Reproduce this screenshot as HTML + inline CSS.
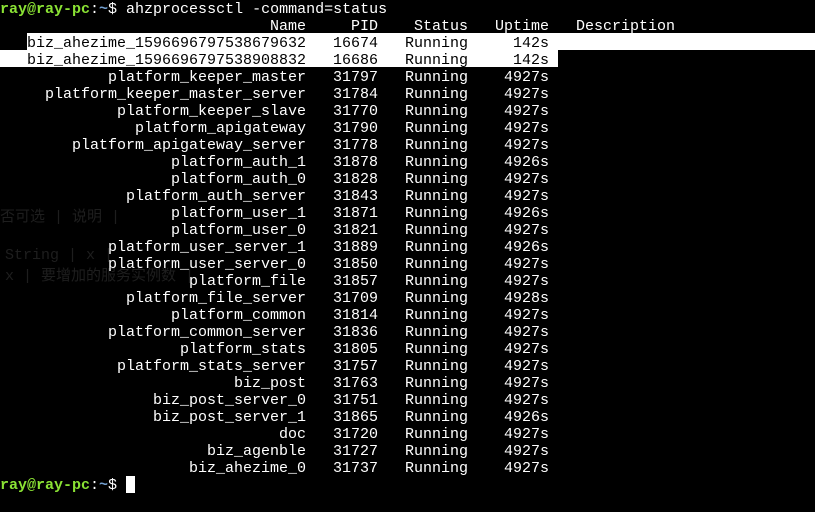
<!DOCTYPE html>
<html><head><meta charset="utf-8"><style>
html,body{margin:0;padding:0;background:#000;width:815px;height:512px;overflow:hidden}
#t{position:absolute;left:0;top:1px;font-family:"Liberation Mono","DejaVu Sans Mono",monospace;font-size:15px;line-height:17px;color:#fff}
.l{height:17px;white-space:pre;position:relative}
.g{color:#8ae234;font-weight:bold}.b{color:#729fcf;font-weight:bold}
.cur{display:inline-block;width:9px;height:17px;background:#fff;vertical-align:top;margin-top:-1px}
.n,.p,.s,.u{display:inline-block;vertical-align:top}
.n{width:306px;text-align:right}.p{width:72px;text-align:right}.s{width:63px;margin-left:27px;text-align:right}.u{width:81px;text-align:right}
.hl{position:absolute;background:#fff;height:17px}
.k{color:#000}
.bg{position:absolute;color:#1e1e1e;font-family:"Liberation Mono","Noto Sans CJK SC",monospace;font-size:15px;white-space:pre}
</style></head><body>
<div class="bg" style="left:0;top:205px">否可选 | 说明 |</div>
<div class="bg" style="left:5px;top:247px">String | x |</div>
<div class="bg" style="left:5px;top:264px">x | 要增加的服务实例数 |</div>
<div class="hl" style="left:27px;top:33px;width:788px"></div>
<div class="hl" style="left:0;top:50px;width:558px"></div>
<div id="t">
<div class="l"><span class="g">ray@ray-pc</span>:<span class="b">~</span>$ ahzprocessctl -command=status</div>
<div class="l"><span class="n">Name</span><span class="p">PID</span><span class="s" style="width:54px;margin-left:36px">Status</span><span class="u">Uptime</span>   Description</div>
<div class="l k"><span class="n">biz_ahezime_1596696797538679632</span><span class="p">16674</span><span class="s">Running</span><span class="u">142s</span></div>
<div class="l k"><span class="n">biz_ahezime_1596696797538908832</span><span class="p">16686</span><span class="s">Running</span><span class="u">142s</span></div>
<div class="l"><span class="n">platform_keeper_master</span><span class="p">31797</span><span class="s">Running</span><span class="u">4927s</span></div>
<div class="l"><span class="n">platform_keeper_master_server</span><span class="p">31784</span><span class="s">Running</span><span class="u">4927s</span></div>
<div class="l"><span class="n">platform_keeper_slave</span><span class="p">31770</span><span class="s">Running</span><span class="u">4927s</span></div>
<div class="l"><span class="n">platform_apigateway</span><span class="p">31790</span><span class="s">Running</span><span class="u">4927s</span></div>
<div class="l"><span class="n">platform_apigateway_server</span><span class="p">31778</span><span class="s">Running</span><span class="u">4927s</span></div>
<div class="l"><span class="n">platform_auth_1</span><span class="p">31878</span><span class="s">Running</span><span class="u">4926s</span></div>
<div class="l"><span class="n">platform_auth_0</span><span class="p">31828</span><span class="s">Running</span><span class="u">4927s</span></div>
<div class="l"><span class="n">platform_auth_server</span><span class="p">31843</span><span class="s">Running</span><span class="u">4927s</span></div>
<div class="l"><span class="n">platform_user_1</span><span class="p">31871</span><span class="s">Running</span><span class="u">4926s</span></div>
<div class="l"><span class="n">platform_user_0</span><span class="p">31821</span><span class="s">Running</span><span class="u">4927s</span></div>
<div class="l"><span class="n">platform_user_server_1</span><span class="p">31889</span><span class="s">Running</span><span class="u">4926s</span></div>
<div class="l"><span class="n">platform_user_server_0</span><span class="p">31850</span><span class="s">Running</span><span class="u">4927s</span></div>
<div class="l"><span class="n">platform_file</span><span class="p">31857</span><span class="s">Running</span><span class="u">4927s</span></div>
<div class="l"><span class="n">platform_file_server</span><span class="p">31709</span><span class="s">Running</span><span class="u">4928s</span></div>
<div class="l"><span class="n">platform_common</span><span class="p">31814</span><span class="s">Running</span><span class="u">4927s</span></div>
<div class="l"><span class="n">platform_common_server</span><span class="p">31836</span><span class="s">Running</span><span class="u">4927s</span></div>
<div class="l"><span class="n">platform_stats</span><span class="p">31805</span><span class="s">Running</span><span class="u">4927s</span></div>
<div class="l"><span class="n">platform_stats_server</span><span class="p">31757</span><span class="s">Running</span><span class="u">4927s</span></div>
<div class="l"><span class="n">biz_post</span><span class="p">31763</span><span class="s">Running</span><span class="u">4927s</span></div>
<div class="l"><span class="n">biz_post_server_0</span><span class="p">31751</span><span class="s">Running</span><span class="u">4927s</span></div>
<div class="l"><span class="n">biz_post_server_1</span><span class="p">31865</span><span class="s">Running</span><span class="u">4926s</span></div>
<div class="l"><span class="n">doc</span><span class="p">31720</span><span class="s">Running</span><span class="u">4927s</span></div>
<div class="l"><span class="n">biz_agenble</span><span class="p">31727</span><span class="s">Running</span><span class="u">4927s</span></div>
<div class="l"><span class="n">biz_ahezime_0</span><span class="p">31737</span><span class="s">Running</span><span class="u">4927s</span></div>
<div class="l"><span class="g">ray@ray-pc</span>:<span class="b">~</span>$ <span class="cur"></span></div>
</div>
</body></html>
